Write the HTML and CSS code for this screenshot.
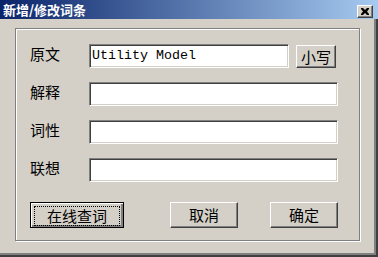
FILE: index.html
```html
<!DOCTYPE html>
<html lang="zh-CN">
<head>
  <meta charset="UTF-8" />
  <title>新增/修改词条</title>
  <link rel="stylesheet" href="styles.css">
</head>
<body>

<div class="window">
  <div class="titlebar">
    <span class="title">新增/修改词条</span>
    <span class="close">
      <svg width="8" height="7" viewBox="0 0 8 7">
        <path d="M0 0h2l2 2 2-2h2v1L6 3.5 8 6v1H6L4 5 2 7H0V6l2-2.5L0 1z" fill="#000"/>
      </svg>
    </span>
  </div>

  <div class="client">
    <div class="group">
      <div class="row">
        <label class="label">原文</label>
        <div class="field short">Utility Model</div>
        <button class="btn small">小写</button>
      </div>
      <div class="row">
        <label class="label">解释</label>
        <div class="field"></div>
      </div>
      <div class="row">
        <label class="label">词性</label>
        <div class="field"></div>
      </div>
      <div class="row">
        <label class="label">联想</label>
        <div class="field"></div>
      </div>

      <div class="actions">
        <button class="btn default wide"><span class="focus">在线查词</span></button>
        <button class="btn cancel">取消</button>
        <button class="btn ok">确定</button>
      </div>
    </div>
  </div>
</div>

</body>
</html>
```

FILE: styles.css
```css
body {
  margin: 0;
  padding: 0;
  background: #d4d0c8;
  font-family: "Noto Sans CJK SC", "Noto Sans", sans-serif;
}
.window {
  width: 378px;
  height: 257px;
  background: #d4d0c8;
  display: flex;
  flex-direction: column;
}
.titlebar {
  height: 19px;
  background: linear-gradient(to right, #0a246a, #a6caf0);
  display: flex;
  align-items: center;
  padding: 0 5px 0 3px;
}
.title {
  flex: 1;
  color: white;
  font-weight: bold;
  font-size: 13px;
  line-height: 19px;
}
.close {
  width: 16px;
  height: 13px;
  margin-top: 3px;
  box-sizing: border-box;
  background: #d4d0c8;
  border-top: 1px solid #fff;
  border-left: 1px solid #fff;
  border-right: 1px solid #404040;
  border-bottom: 1px solid #404040;
  box-shadow: inset -1px -1px #808080;
  display: flex;
  align-items: center;
  justify-content: center;
}
.close svg {
  display: block;
}
.client {
  flex: 1;
  box-sizing: border-box;
  padding: 9px 0 0 15px;
  border-right: 2px solid #404040;
  border-bottom: 2px solid #404040;
  box-shadow: inset -2px -2px #808080;
}
.group {
  width: 345px;
  height: 213px;
  box-sizing: border-box;
  border: 1px solid #808080;
  box-shadow: inset 1px 1px #fff, 1px 1px #fff;
  padding: 15px 0 0 14px;
}
.row {
  display: flex;
  align-items: center;
  height: 24px;
  margin-bottom: 14px;
}
.label {
  width: 59px;
  font-size: 15px;
  line-height: 20px;
  margin-top: -4px;
  color: #000;
}
.field {
  width: 249px;
  height: 24px;
  box-sizing: border-box;
  background: #fff;
  border-top: 1px solid #808080;
  border-left: 1px solid #808080;
  border-right: 1px solid #fff;
  border-bottom: 1px solid #fff;
  box-shadow: inset 1px 1px #404040, inset -1px -1px #d4d0c8;
  font-family: "Liberation Mono", monospace;
  font-size: 13.33px;
  line-height: 22px;
  padding-left: 2px;
}
.field.short {
  width: 200px;
}
.btn {
  box-sizing: border-box;
  background: #d4d0c8;
  border-top: 1px solid #fff;
  border-left: 1px solid #fff;
  border-right: 1px solid #404040;
  border-bottom: 1px solid #404040;
  box-shadow: inset -1px -1px #808080;
  font-family: "Noto Sans CJK SC", sans-serif;
  font-size: 15px;
  color: #000;
  padding: 0;
  margin: 0;
  height: 26px;
  line-height: 22px;
}
.small {
  width: 40px;
  height: 23px;
  margin-left: 7px;
  line-height: 19px;
}
.actions {
  display: flex;
  margin-top: 20px;
}
.wide {
  width: 94px;
}
.default {
  border: 1px solid #000;
  box-shadow: inset 1px 1px #fff, inset -2px -2px #808080, inset -1px -1px #404040;
  padding: 3px;
}
.focus {
  display: block;
  height: 18px;
  line-height: 17px;
  border: 1px dotted #000;
}
.cancel {
  width: 68px;
  margin-left: 46px;
}
.ok {
  width: 68px;
  margin-left: 32px;
}
```
